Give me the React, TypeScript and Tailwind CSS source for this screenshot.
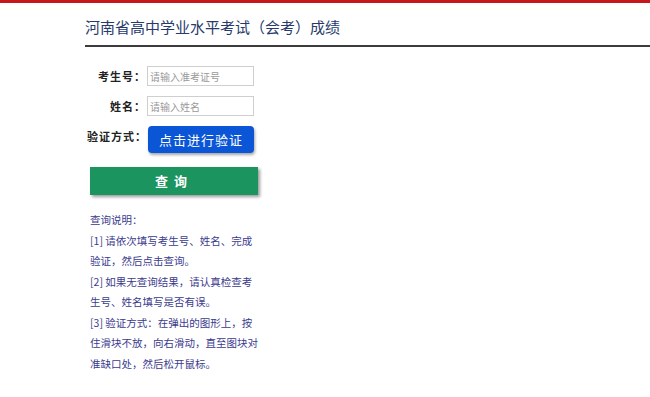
import React from 'react';

const notes = [
  '[1] 请依次填写考生号、姓名、完成验证，然后点击查询。',
  '[2] 如果无查询结果，请认真检查考生号、姓名填写是否有误。',
  '[3] 验证方式：在弹出的图形上，按住滑块不放，向右滑动，直至图块对准缺口处，然后松开鼠标。',
];

export default function App() {
  return (
    <div className="min-h-[397px] bg-white font-['Noto_Sans_CJK_SC',sans-serif]">
      <div className="h-[3px] bg-[#c8161d]" />

      <div className="pl-[85px] pt-[14px]">
        <h1 className="text-[15px] leading-[20px] text-[#273a6b] pb-[8px] border-b-2 border-[#3c3c3c]">
          河南省高中学业水平考试（会考）成绩
        </h1>

        <div className="pl-[2px] pt-[19px] w-[175px]">
          <div className="flex flex-col gap-[10px]">
            <div className="flex items-center">
              <label className="w-[59px] shrink-0 whitespace-nowrap text-right text-[11px] font-bold tracking-[1px] text-[#222]">考生号：</label>
              <input
                placeholder="请输入准考证号"
                className="ml-[1px] w-[107px] h-[20px] border border-[#cfcfcf] px-[2px] text-[10px] placeholder:text-[#9a9a9a] outline-none"
              />
            </div>
            <div className="flex items-center">
              <label className="w-[59px] shrink-0 whitespace-nowrap text-right text-[11px] font-bold tracking-[1px] text-[#222]">姓名：</label>
              <input
                placeholder="请输入姓名"
                className="ml-[1px] w-[107px] h-[20px] border border-[#cfcfcf] px-[2px] text-[10px] placeholder:text-[#9a9a9a] outline-none"
              />
            </div>
            <div className="flex items-start">
              <label className="w-[59px] shrink-0 whitespace-nowrap text-right text-[11px] font-bold tracking-[1px] text-[#222] pt-[2px]">验证方式：</label>
              <button className="ml-[2px] w-[106px] h-[27px] rounded-[4px] bg-[#0b56d6] text-white text-[13px] tracking-[1px] shadow-[1px_2px_3px_rgba(0,0,0,0.35)]">
                点击进行验证
              </button>
            </div>
          </div>

          <button className="mt-[14px] ml-[3px] w-[168px] h-[28px] bg-[#1b9460] text-white text-[13px] font-bold tracking-[6px] shadow-[2px_2px_3px_rgba(0,0,0,0.4)]">
            查询
          </button>

          <div className="mt-[15px] ml-[3px] w-[172px] text-[10.5px] leading-[20.5px] text-[#3b3b8e]">
            <p>查询说明：</p>
            {notes.map((n) => (
              <p key={n}>{n}</p>
            ))}
          </div>
        </div>
      </div>
    </div>
  );
}
